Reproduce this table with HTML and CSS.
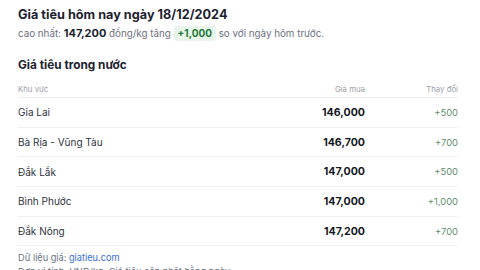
FILE: index.html
```html
<!DOCTYPE html>
<html lang="vi">
<head>
<meta charset="utf-8">
<link rel="stylesheet" href="styles.css">
</head>
<body>
<div class="page">
  <h1 class="title">Giá tiêu hôm nay ngày 18/12/2024</h1>
  <p class="sub">cao nhất: <b class="hi">147,200</b> đồng/kg tăng <span class="badge">+1,000</span> so với ngày hôm trước.</p>
  <h2 class="heading">Giá tiêu trong nước</h2>
  <div class="table">
    <div class="row head"><span>Khu vực</span><span class="num">Giá mua</span><span class="num">Thay đổi</span></div>
    <div class="row"><span>Gia Lai</span><span class="num price">146,000</span><span class="num chg">+500</span></div>
    <div class="row"><span>Bà Rịa - Vũng Tàu</span><span class="num price">146,700</span><span class="num chg">+700</span></div>
    <div class="row"><span>Đắk Lắk</span><span class="num price">147,000</span><span class="num chg">+500</span></div>
    <div class="row"><span>Bình Phước</span><span class="num price">147,000</span><span class="num chg">+1,000</span></div>
    <div class="row"><span>Đắk Nông</span><span class="num price">147,200</span><span class="num chg">+700</span></div>
  </div>
  <div class="notes">
    <p class="foot">Dữ liệu giá: <a href="#">giatieu.com</a></p>
    <p class="foot">Đơn vị tính: VNĐ/kg. Giá tiêu cập nhật hằng ngày.</p>
  </div>
</div>
</body>
</html>
```
FILE: styles.css
```css
html, body { margin: 0; padding: 0; background: #fff; }
body { font-family: Inter, "Noto Sans", sans-serif; color: #1f2430; }
.page { padding: 6px 22px 0 18px; }
.title { margin: 0; font-size: 12.7px; line-height: 18px; font-weight: 650; color: #1d2230; }
.sub { margin: 0; font-size: 9.8px; line-height: 18px; color: #6b7280; }
.hi { font-size: 11px; font-weight: 700; color: #1a1f2c; }
.badge { display: inline-block; background: #e8f5ea; color: #1f7a3a; font-weight: 700; font-size: 10px; line-height: 15px; padding: 0 4px; border-radius: 3px; }
.heading { margin: 13px 0 0; font-size: 11.8px; line-height: 18px; font-weight: 700; color: #1d2230; }
.table { margin-top: 7px; width: 440px; }
.row { display: grid; grid-template-columns: 1fr 120px 93px; align-items: center; height: 29.7px; border-bottom: 1px solid #efefef; box-sizing: border-box; font-size: 10px; color: #2e3340; }
.row.head { height: 17px; font-size: 7.8px; color: #9aa0a8; }
.num { text-align: right; }
.price { font-size: 10.6px; font-weight: 700; color: #141822; }
.chg { font-size: 9.4px; color: #5d8e6c; }
.notes { margin-top: 5px; }
.foot { margin: 0; font-size: 9.2px; line-height: 14px; color: #6b7280; }
.foot a { color: #3a6fd6; text-decoration: none; }
```
